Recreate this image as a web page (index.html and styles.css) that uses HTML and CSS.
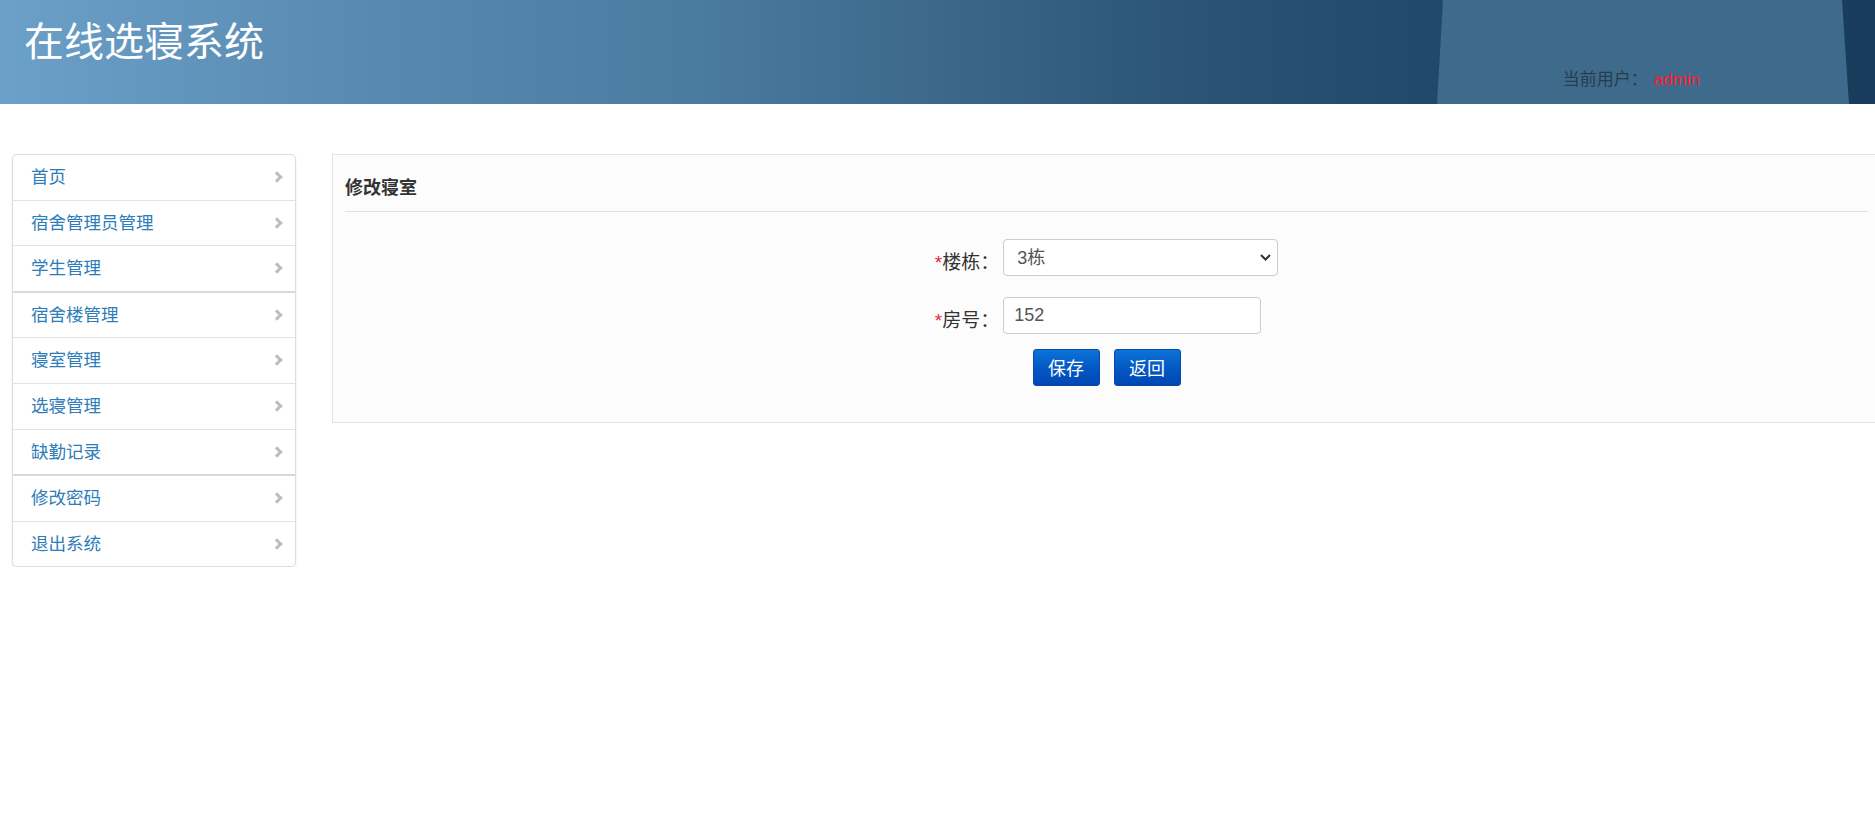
FILE: index.html
```html
<!DOCTYPE html>
<html lang="zh">
<head>
    <meta charset="utf-8">
    <title>修改寝室 - 在线选寝系统</title>
    <link rel="stylesheet" href="styles.css">
</head>
<body>
<div class="header">
    <h1 class="logo">在线选寝系统</h1>
    <div class="user-info">当前用户：<span class="user-name">admin</span></div>
</div>

<div class="page">
    <ul class="menu">
        <li><a href="#">首页</a></li>
        <li><a href="#">宿舍管理员管理</a></li>
        <li><a href="#">学生管理</a></li>
        <li class="group-start"><a href="#">宿舍楼管理</a></li>
        <li><a href="#">寝室管理</a></li>
        <li><a href="#">选寝管理</a></li>
        <li><a href="#">缺勤记录</a></li>
        <li class="group-start"><a href="#">修改密码</a></li>
        <li><a href="#">退出系统</a></li>
    </ul>

    <div class="panel">
        <div class="panel-title">修改寝室</div>
        <form class="edit-form" method="post">
            <div class="fields">
                <label class="field-label" for="building"><span class="req">*</span>楼栋：</label>
                <div class="select-wrap">
                    <select id="building" name="building">
                        <option>1栋</option>
                        <option>2栋</option>
                        <option selected>3栋</option>
                    </select>
                    <svg class="select-arrow" width="11" height="7" viewBox="0 0 11 7">
                        <polyline points="1,1 5.5,5.5 10,1" fill="none" stroke="#333" stroke-width="2"/>
                    </svg>
                </div>

                <label class="field-label" for="number"><span class="req">*</span>房号：</label>
                <div>
                    <input type="text" id="number" name="number" value="152">
                </div>
            </div>
            <div class="actions">
                <button type="submit" class="btn">保存</button>
                <button type="button" class="btn">返回</button>
            </div>
        </form>
    </div>
</div>
</body>
</html>
```

FILE: styles.css
```css
html,
body {
    overflow-x: hidden;
}

body {
    margin: 0;
    font-family: "Liberation Sans", "Noto Sans CJK SC", sans-serif;
    font-size: 17.5px;
    color: #333333;
    background: #FFFFFF;
}

/* шапка */
.header {
    position: relative;
    display: flex;
    height: 104px;
    background: linear-gradient(to right, #6ba0c8 0%, #5889b0 20%, #4b7b9f 37%, #2a5375 64%, #21486a 77%, #183c5c 100%);
}

.header::after {
    content: "";
    position: absolute;
    top: 0;
    bottom: 0;
    left: 1437px;
    width: 412px;
    background: #3e6a8c;
    clip-path: polygon(6px 0, 405px 0, 412px 100%, 0 100%);
}

.logo {
    margin: 0;
    padding: 18px 0 0 24px;
    font-size: 40px;
    font-weight: normal;
    line-height: 48px;
    color: #FFFFFF;
}

.user-info {
    position: relative;
    z-index: 1;
    align-self: flex-end;
    margin: 0 175px 12px auto;
    line-height: 24px;
    font-size: 17px;
    color: #2b3b4b;
}

.user-name {
    margin-left: 6px;
    color: #ff1a2e;
}

/* основная часть */
.page {
    display: flex;
    align-items: flex-start;
    gap: 36px;
    padding: 50px 0 0 12px;
}

.menu {
    box-sizing: border-box;
    flex: 0 0 284px;
    margin: 0;
    padding: 0;
    list-style: none;
    border: 1px solid #dddddd;
    border-radius: 5px;
    background: #FFFFFF;
    box-shadow: 0 1px 3px rgba(0, 0, 0, 0.08);
}

.menu li + li {
    border-top: 1px solid #e3e3e3;
}

.menu li.group-start {
    border-top: 2px solid #d9d9d9;
}

.menu a {
    position: relative;
    display: block;
    height: 44.6px;
    padding: 0 18px;
    line-height: 44px;
    color: #2e7db8;
    text-decoration: none;
}

.menu a::after {
    content: "";
    position: absolute;
    right: 14px;
    top: 18px;
    width: 5px;
    height: 5px;
    border-top: 3px solid #bdbdbd;
    border-right: 3px solid #bdbdbd;
    transform: rotate(45deg);
}

.panel {
    flex: 1;
    margin-right: -6px;
    padding: 0 12px;
    border: 1px solid #e3e3e3;
    background: #fcfcfc;
}

.panel-title {
    padding: 20px 0 10px;
    line-height: 26px;
    font-size: 18px;
    font-weight: bold;
    color: #333333;
    border-bottom: 1px solid #e2e2e2;
}

.edit-form {
    padding: 27px 0 36px;
}

.fields {
    display: grid;
    grid-template-columns: auto 275px;
    grid-auto-rows: 37px;
    row-gap: 21px;
    column-gap: 4px;
    justify-content: center;
}

.field-label {
    padding-top: 9px;
    line-height: 30px;
    font-size: 19px;
    text-align: right;
    color: #333333;
}

.req {
    color: #e8283c;
}

.select-wrap {
    position: relative;
}

select,
input[type=text] {
    box-sizing: border-box;
    height: 37px;
    border: 1px solid #cccccc;
    border-radius: 4px;
    background: #FFFFFF;
    font-family: inherit;
    font-size: 18px;
    color: #555555;
    outline: none;
}

select {
    width: 275px;
    padding: 0 30px 0 13px;
    appearance: none;
    -webkit-appearance: none;
}

.select-arrow {
    position: absolute;
    right: 7px;
    top: 15px;
    pointer-events: none;
}

input[type=text] {
    width: 258px;
    padding: 0 10px;
}

.actions {
    display: flex;
    justify-content: center;
    gap: 14px;
    margin-top: 15px;
}

.btn {
    box-sizing: border-box;
    width: 67px;
    height: 37px;
    padding: 0 0 2px;
    border: 1px solid #0a4aa0;
    border-radius: 3px;
    background: linear-gradient(to bottom, #0b73d8 0%, #0459c4 50%, #0047b5 100%);
    font-family: inherit;
    font-size: 18px;
    color: #FFFFFF;
    cursor: pointer;
}
```
